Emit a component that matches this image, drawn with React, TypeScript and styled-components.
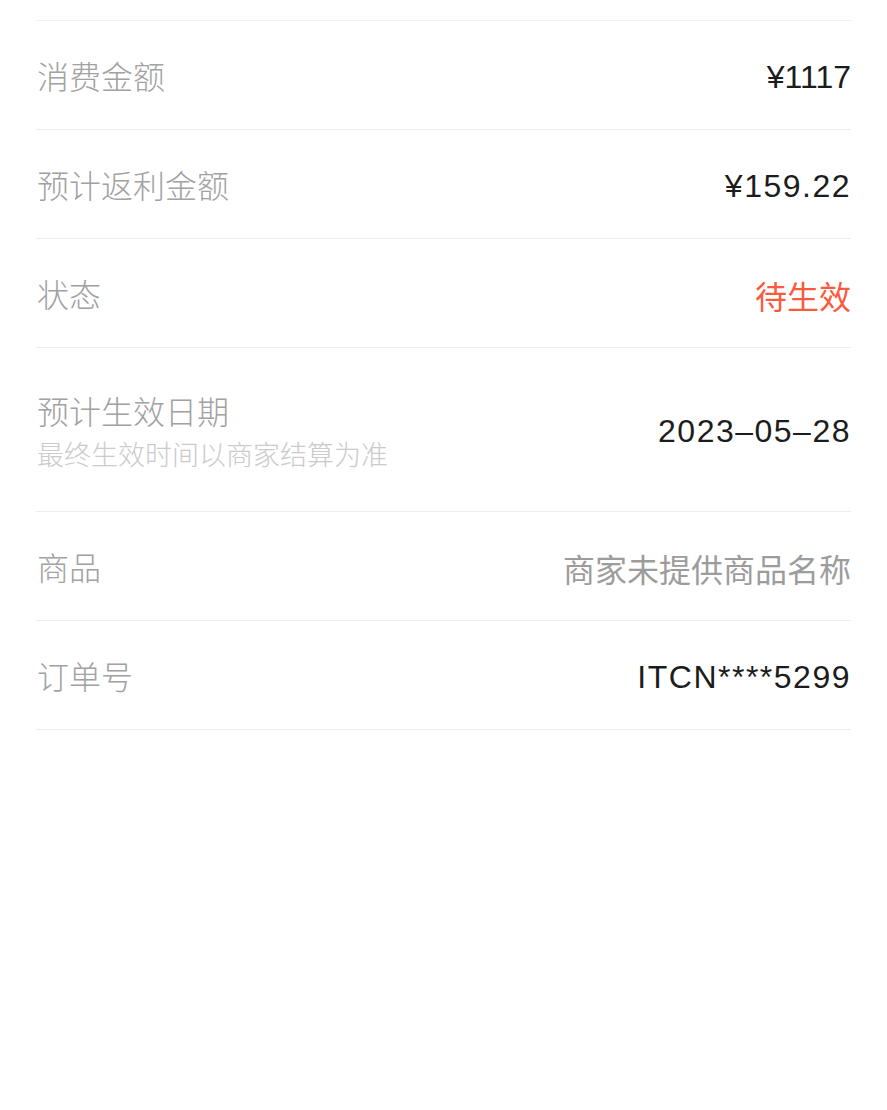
import React from 'react';
import styled, { createGlobalStyle } from 'styled-components';

const GlobalStyle = createGlobalStyle`
    html, body {
        margin: 0;
        padding: 0;
        background: #ffffff;
    }
    body {
        font-family: "Liberation Sans", "Noto Sans CJK SC", sans-serif;
    }
`

const Page = styled.div`
    width: 100%;
    min-height: 1110px;
    padding: 20px 36px 0 36px;
    box-sizing: border-box;
    background: #fff;
`

const List = styled.div`
    border-top: 1px solid #f0f0f0;
`

const Row = styled.div<{ tall?: boolean }>`
    display: flex;
    align-items: center;
    justify-content: space-between;
    height: ${props => props.tall ? '163px' : '108px'};
    border-bottom: 1px solid #ededed;
`

const LabelBox = styled.div`
    display: flex;
    flex-direction: column;
    gap: 10px;
    padding-top: 2px;
`

const Label = styled.span`
    font-family: "Noto Sans CJK SC", sans-serif;
    font-size: 32px;
    font-weight: 300;
    line-height: 36px;
    color: #a2a2a2;
    padding-left: 1px;
`

const SubLabel = styled.span`
    font-family: "Noto Sans CJK SC", sans-serif;
    font-size: 27px;
    font-weight: 300;
    line-height: 32px;
    color: #cbcbcb;
    padding-left: 1px;
`

const Value = styled.span<{ tone?: 'dark' | 'red' | 'gray', cjk?: boolean, tight?: boolean }>`
    font-family: ${props => props.cjk ? '"Noto Sans CJK SC", sans-serif' : '"Liberation Sans", "Noto Sans CJK SC", sans-serif'};
    font-size: 32px;
    font-weight: ${props => props.cjk ? 400 : 400};
    letter-spacing: ${props => props.cjk ? '0' : props.tight ? '0' : '1.5px'};
    line-height: 38px;
    padding-top: 3px;
    color: ${props => props.tone === 'red' ? '#fb5a3e' : props.tone === 'gray' ? '#9c9c9c' : '#1c1c1c'};
`

const rows = [
    { label: '消费金额', value: '¥1117', tight: true },
    { label: '预计返利金额', value: '¥159.22', tight: false },
    { label: '状态', value: '待生效', tone: 'red' as const, cjk: true },
]

export default function App() {
    return (
        <>
            <GlobalStyle />
            <Page>
                <List>
                    {rows.map(r => (
                        <Row key={r.label}>
                            <Label>{r.label}</Label>
                            <Value tone={r.tone ?? 'dark'} cjk={r.cjk} tight={r.tight}>{r.value}</Value>
                        </Row>
                    ))}
                    <Row tall>
                        <LabelBox>
                            <Label>{'预计生效日期'}</Label>
                            <SubLabel>{'最终生效时间以商家结算为准'}</SubLabel>
                        </LabelBox>
                        <Value tone="dark">{'2023–05–28'}</Value>
                    </Row>
                    <Row>
                        <Label>{'商品'}</Label>
                        <Value tone="gray" cjk>{'商家未提供商品名称'}</Value>
                    </Row>
                    <Row>
                        <Label>{'订单号'}</Label>
                        <Value tone="dark">{'ITCN****5299'}</Value>
                    </Row>
                </List>
            </Page>
        </>
    )
}
